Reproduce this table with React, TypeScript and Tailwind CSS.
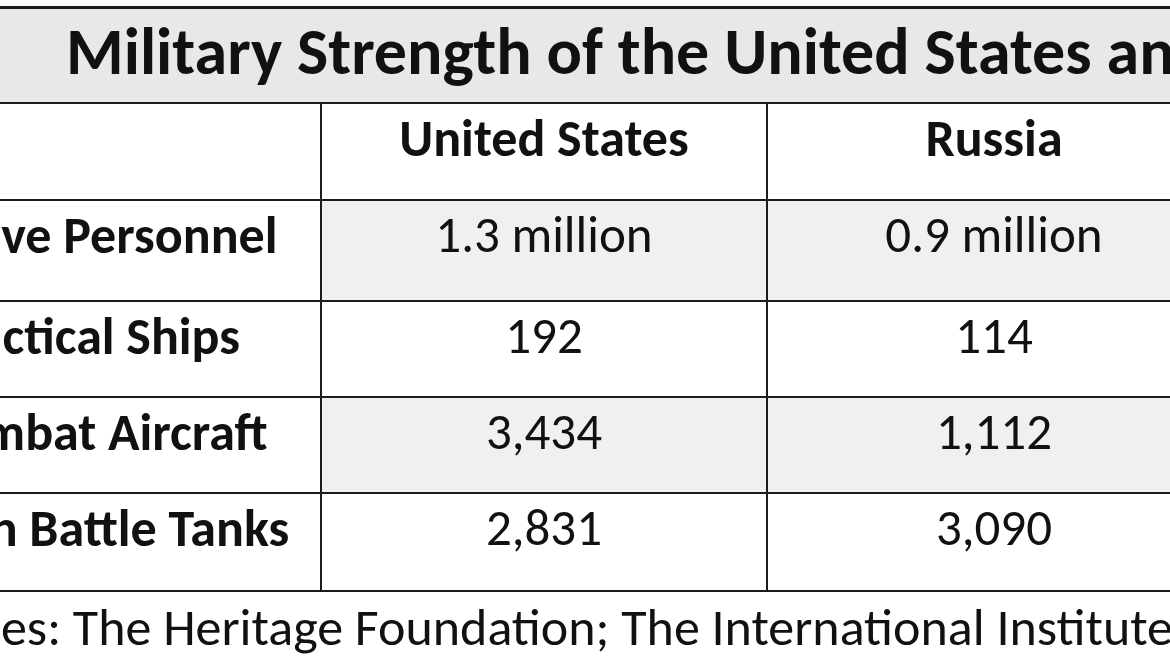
const rows = [
  { label: "Active Personnel", us: "1.3 million", ru: "0.9 million", shade: true, h: "h-[101px]" },
  { label: "Tactical Ships", us: "192", ru: "114", shade: false, h: "h-[96px]" },
  { label: "Combat Aircraft", us: "3,434", ru: "1,112", shade: true, h: "h-[96px]" },
  { label: "Main Battle Tanks", us: "2,831", ru: "3,090", shade: false, h: "h-[98px]" },
];

export default function App() {
  return (
    <div className="h-[658px] w-[1170px] overflow-hidden bg-white font-['Carlito','Calibri','Lato',sans-serif] text-[#111]">
      <div className="-ml-[125px] w-[1345px] pt-[6px]">
        <div className="h-[98px] whitespace-nowrap border-b-2 border-t-[3px] border-[#1c1c1c] bg-[#e8e8e8] pl-[191px] pt-[10px] text-[66px] font-bold leading-none">
          Military Strength of the United States and Russia
        </div>

        <div className="flex h-[97px] border-b-2 border-[#1c1c1c]">
          <div className="w-[447px] border-r-2 border-[#1c1c1c]" />
          <div className="w-[446px] border-r-2 border-[#1c1c1c] pt-[8px] text-center text-[52px] font-bold leading-none">
            United States
          </div>
          <div className="w-[452px] pt-[8px] text-center text-[52px] font-bold leading-none">Russia</div>
        </div>

        {rows.map((r) => (
          <div key={r.label} className={`flex border-b-2 border-[#1c1c1c] ${r.h}`}>
            <div className="w-[447px] whitespace-nowrap border-r-2 border-[#1c1c1c] pt-[8px] text-center text-[52px] font-bold leading-none">
              {r.label}
            </div>
            <div
              className={`w-[446px] border-r-2 border-[#1c1c1c] pt-[8px] text-center text-[51px] leading-none ${
                r.shade ? "bg-[#f0f0f0]" : ""
              }`}
            >
              {r.us}
            </div>
            <div className={`w-[452px] pt-[8px] text-center text-[51px] leading-none ${r.shade ? "bg-[#f0f0f0]" : ""}`}>
              {r.ru}
            </div>
          </div>
        ))}

        <div className="whitespace-nowrap pl-[8px] pt-[9px] text-[52px] leading-none">
          Sources: The Heritage Foundation; The International Institute for Strategic Studies
        </div>
      </div>
    </div>
  );
}
